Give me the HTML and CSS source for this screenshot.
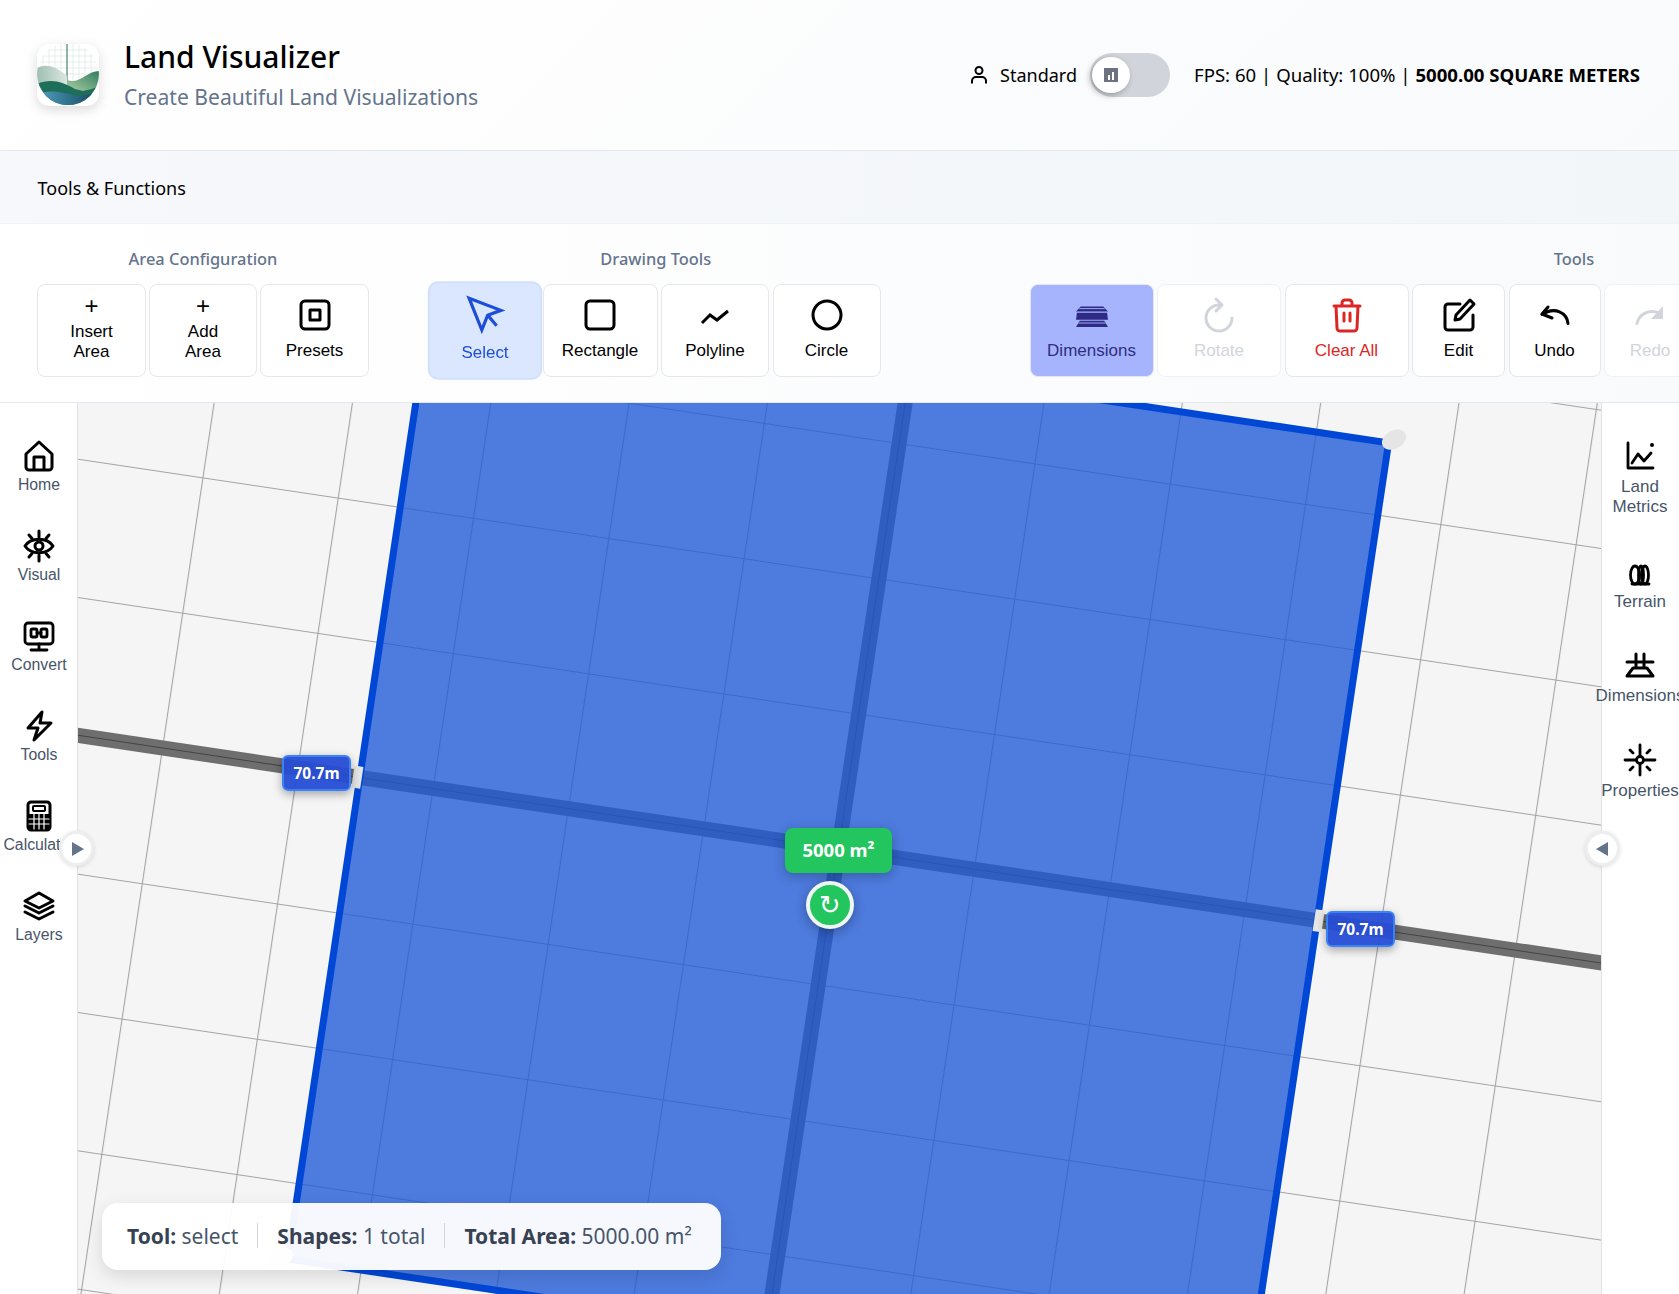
FILE: index.html
```html
<!DOCTYPE html>
<html lang="en">
<head>
<meta charset="utf-8">
<title>Land Visualizer</title>
<link rel="stylesheet" href="styles.css">
</head>
<body>
<div class="app">
  <header class="header">
    <div class="brand">
      <svg class="logo" viewBox="0 0 62 62">
        <defs>
          <clipPath id="logoClip"><circle cx="31" cy="30" r="31"/></clipPath>
          <linearGradient id="hillA" x1="0" x2="1"><stop offset="0" stop-color="#9fbfb2"/><stop offset="1" stop-color="#dbe6e1"/></linearGradient>
          <linearGradient id="hillB" x1="0" x2="1" y1="1" y2="0"><stop offset="0" stop-color="#a9cba2"/><stop offset="1" stop-color="#2f7d5e"/></linearGradient>
          <linearGradient id="hillC" x1="0" x2="1"><stop offset="0" stop-color="#4f9fc0"/><stop offset="1" stop-color="#14465a"/></linearGradient>
        </defs>
        <rect width="62" height="62" rx="12" fill="#fff"/>
        <g clip-path="url(#logoClip)">
          <path class="logo-grid" d="M6 0V62M12 0V62M18 0V62M24 0V62M36 0V62M42 0V62M48 0V62M54 0V62M0 6H62M0 12H62M0 18H62M0 24H62M0 30H62"/>
          <path d="M30 0V42" stroke="#1f6b55" fill="none"/>
          <path d="M0 24C10 19 20 23 30 32V42L0 46Z" fill="url(#hillA)"/>
          <path d="M30 36C42 41 50 27 62 27V46H30Z" fill="url(#hillB)"/>
          <path d="M0 40C14 34 26 38 38 45C46 48 54 46 62 42V62H0Z" fill="#1e6f59"/>
          <path d="M0 50C14 45 26 49 36 51C46 53 56 49 62 46V62H0Z" fill="url(#hillC)"/>
        </g>
      </svg>
      <div class="brand-text">
        <h1 class="title">Land Visualizer</h1>
        <p class="subtitle">Create Beautiful Land Visualizations</p>
      </div>
    </div>
    <div class="status">
      <svg class="user-icon" viewBox="0 0 20 20"><circle cx="10" cy="5.5" r="3.5"/><path d="M3 18.5V16a4 4 0 0 1 4-4h6a4 4 0 0 1 4 4v2.500"/></svg>
      <span class="mode">Standard</span>
      <div class="toggle">
        <div class="thumb"><span class="thumb-icon"><i class="bar-a"></i><i class="bar-b"></i></span></div>
      </div>
      <span class="stats">FPS: 60 | Quality: 100% | <strong>5000.00 SQUARE METERS</strong></span>
    </div>
  </header>

  <div class="strip">Tools &amp; Functions</div>

  <div class="toolbar">
    <section class="group group-area">
      <h2 class="group-title">Area Configuration</h2>
      <div class="tool-row">
        <button class="tool"><span class="plus">+</span><span>Insert<br>Area</span></button>
        <button class="tool"><span class="plus">+</span><span>Add<br>Area</span></button>
        <button class="tool">
          <svg class="icon" viewBox="0 0 32 32"><rect x="2" y="2" width="28" height="28" rx="4"/><rect x="11" y="11" width="10" height="10"/></svg>
          <span>Presets</span>
        </button>
      </div>
    </section>
    <section class="group group-draw">
      <h2 class="group-title">Drawing Tools</h2>
      <div class="tool-row">
        <button class="tool tool-active">
          <svg class="icon icon-miter" viewBox="0 0 32 32"><path d="M1 1L31 12.500L18.500 17L13 31ZM18.500 17L27 27"/></svg>
          <span>Select</span>
        </button>
        <button class="tool">
          <svg class="icon" viewBox="0 0 32 32"><rect x="2" y="2" width="28" height="28" rx="4"/></svg>
          <span>Rectangle</span>
        </button>
        <button class="tool">
          <svg class="icon icon-miter" viewBox="0 0 32 32"><path d="M3 24L11 16L18 21L29 12"/></svg>
          <span>Polyline</span>
        </button>
        <button class="tool">
          <svg class="icon" viewBox="0 0 32 32"><circle cx="16" cy="16" r="14"/></svg>
          <span>Circle</span>
        </button>
      </div>
    </section>
    <section class="group group-tools">
      <h2 class="group-title">Tools</h2>
      <div class="tool-row">
        <button class="tool tool-dim">
          <svg class="icon icon-solid" viewBox="0 0 34 32">
            <path d="M5 7H29L34 12.300H0Z"/><path d="M1 13.700H33L34 21H0Z"/><path d="M4 22H30L34 28.700H0Z"/>
            <path d="M4 9.200H30" class="dim-line"/><path d="M3 24.500H31" class="dim-line"/>
          </svg>
          <span>Dimensions</span>
        </button>
        <button class="tool tool-off">
          <svg class="icon" viewBox="0 0 32 32"><path d="M29 19A13 13 0 1 1 16 6"/><path d="M13 0L19 6L13 12"/></svg>
          <span>Rotate</span>
        </button>
        <button class="tool tool-danger">
          <svg class="icon" viewBox="0 0 32 32"><path d="M3 7H29M11 7V4a3 3 0 0 1 3-3h4a3 3 0 0 1 3 3V7M5 7L6 29a3 3 0 0 0 3 3H23a3 3 0 0 0 3-3L27 7M13 14V22M19 14V22"/></svg>
          <span>Clear All</span>
        </button>
        <button class="tool">
          <svg class="icon" viewBox="0 0 32 32"><path d="M17 5H5a3 3 0 0 0-3 3V28a3 3 0 0 0 3 3H27a3 3 0 0 0 3-3V16"/><path d="M27 1L31 5L17 20L12 21L13 16Z"/></svg>
          <span>Edit</span>
        </button>
        <button class="tool">
          <svg class="icon" viewBox="0 0 32 32"><path d="M29 24.500C28 14 16 7 3 15.500"/><path d="M9 8L3 15L13 19"/></svg>
          <span>Undo</span>
        </button>
        <button class="tool tool-off">
          <svg class="icon" viewBox="0 0 32 32"><path d="M3 24.500C5 15 15 10 25 14"/><path class="fill-current" d="M29 7V20H17Z"/></svg>
          <span>Redo</span>
        </button>
      </div>
    </section>
  </div>

  <div class="work">
    <nav class="side side-left">
      <a class="side-item">
        <svg class="icon" viewBox="0 0 32 32"><path d="M3 14L16 2L29 14V27a3 3 0 0 1-3 3H6a3 3 0 0 1-3-3ZM11 30V17H21V30"/></svg>
        <span>Home</span>
      </a>
      <a class="side-item">
        <svg class="icon" viewBox="0 0 32 32"><path d="M2 16C8 7 24 7 30 16C24 25 8 25 2 16Z"/><circle cx="16" cy="16" r="4"/><path d="M16 1V7M16 25V31M6 5L9 8.500M26 5L23 8.500M6 27L9 23.500M26 27L23 23.500"/></svg>
        <span>Visual</span>
      </a>
      <a class="side-item">
        <svg class="icon icon-thin" viewBox="0 0 32 32"><rect x="2" y="3" width="28" height="21" rx="3"/><path d="M16 24V30M8 30H24M14 13H18"/><rect x="8" y="9" width="6" height="8" rx="1.500"/><rect x="18" y="9" width="6" height="8" rx="1.500"/></svg>
        <span>Convert</span>
      </a>
      <a class="side-item">
        <svg class="icon" viewBox="0 0 32 32"><path d="M19 2L5 18H15L11 30L28 13H17Z"/></svg>
        <span>Tools</span>
      </a>
      <a class="side-item">
        <svg class="icon" viewBox="0 0 32 32"><rect x="5" y="2" width="22" height="28" rx="3"/><rect class="icon-fine" x="10" y="6" width="12" height="5" rx="1"/><rect class="fill-current" x="6" y="14" width="20" height="15"/><path class="grid-white" d="M11 14V29M16 14V29M21 14V29M6 19H26M6 24H26"/></svg>
        <span>Calculator</span>
      </a>
      <a class="side-item">
        <svg class="icon" viewBox="0 0 32 32"><path d="M16 3L30 11L16 18L2 11ZM2 16L16 23L30 16M2 22L16 29L30 22"/></svg>
        <span>Layers</span>
      </a>
    </nav>

    <main class="canvas">
      <svg class="map">
        <defs>
          <pattern id="grid" width="136.8" height="136.8" patternUnits="userSpaceOnUse">
            <path d="M0 0H136.8M0 0V136.8" stroke="#a4a4a4" stroke-width="2.200" fill="none"/>
          </pattern>
        </defs>
        <g transform="translate(760.5 446) rotate(8.5)">
          <rect x="-1300" y="-1300" width="2600" height="2600" fill="url(#grid)"/>
          <rect class="road" x="-1300" y="-7.500" width="2600" height="15"/>
          <rect class="road" x="-7.500" y="-1300" width="15" height="2600"/>
          <path class="road-line" d="M-1300 0H1300M0 -1300V1300"/>
          <rect class="shape" x="-484" y="-483" width="968" height="970"/>
          <rect class="gap" x="-491" y="-11" width="9" height="22"/>
          <rect class="gap" x="481" y="-11" width="9" height="22"/>
          <ellipse class="corner" cx="489" cy="-487" rx="13" ry="9" transform="rotate(-38 489 -487)"/>
          <ellipse class="corner" cx="-491" cy="487" rx="13" ry="9" transform="rotate(-38 -491 487)"/>
        </g>
      </svg>
      <div class="measure measure-left">70.7m</div>
      <div class="measure measure-right">70.7m</div>
      <div class="area-badge">5000 m²</div>
      <div class="rotate-handle">↻</div>
      <button class="collapse collapse-left"><i class="tri-right"></i></button>
      <button class="collapse collapse-right"><i class="tri-left"></i></button>
      <div class="panel">
        <span><b>Tool:</b> select</span>
        <span class="divider"></span>
        <span><b>Shapes:</b> 1 total</span>
        <span class="divider"></span>
        <span><b>Total Area:</b> 5000.00 m²</span>
      </div>
    </main>

    <nav class="side side-right">
      <a class="side-item">
        <svg class="icon icon-thin" viewBox="0 0 32 32"><path d="M4 3V28H29M8 23L14 14L20 21L27 13"/><circle class="fill-current" cx="28" cy="5" r="2"/></svg>
        <span>Land<br>Metrics</span>
      </a>
      <a class="side-item">
        <svg class="icon icon-thin" viewBox="0 0 32 32"><ellipse cx="11" cy="20" rx="4.500" ry="9"/><ellipse cx="17" cy="20" rx="2.500" ry="9"/><ellipse cx="21" cy="20" rx="3.500" ry="9"/><path d="M8 29H25"/></svg>
        <span>Terrain</span>
      </a>
      <a class="side-item">
        <svg class="icon" viewBox="0 0 32 32"><path d="M12 5V19M20 5V19M3 13H29M9 19L3 27H29L23 19Z"/></svg>
        <span>Dimensions</span>
      </a>
      <a class="side-item">
        <svg class="icon icon-thin" viewBox="0 0 32 32"><circle cx="16" cy="16" r="3.500"/><path d="M16 1V12M16 20V31M1 16H12M20 16H31M6 6L9 9M26 6L23 9M6 26L9 23M26 26L23 23"/></svg>
        <span>Properties</span>
      </a>
    </nav>
  </div>
</div>
</body>
</html>
```
FILE: styles.css
```css
* { box-sizing: border-box; }
html, body { margin: 0; height: 100%; overflow: hidden; }
body { font-family: "Noto Sans", "Open Sans", sans-serif; color: #000; background: #fff; }
.app { display: flex; flex-direction: column; height: 1294px; width: 1679px; overflow: hidden; }

.header {
  flex: none; height: 151px; display: flex; align-items: center; justify-content: space-between;
  padding: 0 39px 0 37px; border-bottom: 1px solid #e2e8f0;
  background: linear-gradient(135deg, #ffffff, #f9fafc);
}
.brand { display: flex; align-items: center; gap: 25px; }
.brand-text { margin-bottom: 2px; }
.logo { width: 62px; height: 62px; border-radius: 12px; filter: drop-shadow(0 4px 6px rgba(0,0,0,.14)); }
.logo-grid { stroke: #dbe8e3; stroke-width: .7; fill: none; }
.title { margin: 0; font-size: 30px; font-weight: 500; line-height: 40px; }
.subtitle { margin: 5px 0 0; font-size: 21.100px; line-height: 30px; color: #64748b; }
.status { display: flex; align-items: center; font-size: 18px; }
.user-icon { width: 20px; height: 20px; fill: none; stroke: #000; stroke-width: 2; margin-right: 11px; }
.mode { margin-right: 13px; }
.toggle { width: 80px; height: 44px; border-radius: 22px; background: #d1d5db; padding: 4px 2px; margin-right: 24px; }
.thumb { width: 38px; height: 36px; border-radius: 50%; background: #fff; box-shadow: -2px 2px 6px rgba(0,0,0,.3); display: flex; align-items: center; justify-content: center; }
.thumb-icon { width: 14px; height: 14px; background: #6b7280; display: flex; align-items: flex-end; justify-content: center; gap: 2px; padding-bottom: 2px; }
.bar-a, .bar-b { display: block; width: 2px; background: #fff; }
.bar-a { height: 5px; }
.bar-b { height: 8px; }
.stats { font-size: 18.600px; margin-bottom: 2px; }
.stats strong { font-weight: 700; }

.strip {
  flex: none; height: 73px; display: flex; align-items: center; padding: 2px 0 0 37.500px; font-size: 18px;
  background: linear-gradient(90deg, #f6f8fb, #f3f6f9); border-bottom: 1px solid #eef1f5;
}

.toolbar {
  flex: none; height: 179px; display: flex; padding-left: 37px; overflow: hidden;
  border-bottom: 1px solid #e2e8f0; background: linear-gradient(90deg, #ffffff, #f9fafc);
}
.group { flex: none; }
.group-title { margin: 0; height: 60px; padding-top: 23px; font-size: 16.400px; line-height: 24px; font-weight: 500; color: #64748b; text-align: center; }
.group-draw { margin-left: 62px; }
.group-tools { margin-left: 149px; width: 1089px; }
.tool-row { display: grid; gap: 3.5px; height: 93px; }
.group-area .tool-row { grid-template-columns: 109px 108px 109px; gap: 3px; }
.group-draw .tool-row { grid-template-columns: 108px 115px 108px 108px; }
.group-tools .tool-row { grid-template-columns: 124px 124px 124px 93px 92px 92px; }
.tool {
  display: flex; flex-direction: column; align-items: center; justify-content: center; gap: 10px;
  height: 93px; padding: 0 0 2px; background: #fff; border: 1px solid #e5e7eb; border-radius: 8px;
  font-family: "Liberation Sans", Arial, sans-serif; font-size: 17px; line-height: 20px; color: #000;
}
.plus { font-size: 24px; line-height: 25px; margin-bottom: -10px; transform: translateY(-4px); }
.tool-active { transform: scale(1.06); background: #dbe7fe; border: 2px solid #d2e0fa; color: #1d4ed8; border-radius: 10px; font-size: 16px; }
.tool-dim { background: #a5b4fc; border-color: #e5e7eb; color: #312e81; }
.tool-off { color: #d1d5db; border-color: #f0f1f4; }
.tool-danger { color: #dc2626; }

.icon { width: 32px; height: 32px; flex: none; fill: none; stroke: currentColor; stroke-width: 3; stroke-linecap: round; stroke-linejoin: round; overflow: visible; }
.icon-miter { stroke-linejoin: miter; stroke-linecap: butt; }
.icon-thin { stroke-width: 2.800; }
.icon-fine { stroke-width: 2; }
.icon-solid { stroke: none; fill: #2e2a85; }
.dim-line { stroke: #a5b4fc; stroke-width: 1; fill: none; }
.fill-current { fill: currentColor; stroke: none; }
.grid-white { stroke: #fff; stroke-width: 1.200; }

.work { flex: 1; min-height: 0; display: flex; }
.side { flex: none; width: 78px; background: #fff; display: flex; flex-direction: column; align-items: center; position: relative; z-index: 1; }
.side-left { padding: 37px 0 0 1px; gap: 35px; border-right: 1px solid #e2e2e2; }
.side-right { padding: 37px 1px 0 0; gap: 37.500px; border-left: 1px solid #e2e2e2; }
.side-item { display: flex; flex-direction: column; align-items: center; width: 100%; font-family: "Liberation Sans", Arial, sans-serif; line-height: 20px; color: #475569; text-align: center; white-space: nowrap; }
.side-left .side-item { gap: 3px; font-size: 15.800px; }
.side-right .side-item { gap: 5px; font-size: 17px; }
.side-item .icon { color: #000; }

.canvas { flex: 1; min-width: 0; position: relative; background: #f5f5f5; }
.map { position: absolute; inset: 0; width: 100%; height: 100%; display: block; }
.road { fill: #6e6e6e; }
.road-line { stroke: #444; stroke-width: 1; fill: none; }
.gap { fill: #e6e6e6; }
.shape { fill: rgba(29,88,215,.78); stroke: #0047d6; stroke-width: 7; }
.corner { fill: #e5e5e5; }

.measure {
  position: absolute; width: 69px; height: 36px; display: flex; align-items: center; justify-content: center;
  background: rgba(37,76,212,.95); border: 2px solid #3b82f6; border-radius: 6px; color: #fff; font-weight: 700; font-size: 15.500px;
  box-shadow: 0 3px 10px rgba(0,0,0,.35);
}
.measure-left { left: 204px; top: 352px; }
.measure-right { left: 1248px; top: 508px; }
.area-badge {
  position: absolute; left: 707px; top: 425px; width: 107px; height: 45px; padding-bottom: 2px; display: flex; align-items: center; justify-content: center;
  background: #22c55e; border-radius: 8px; color: #fff; font-weight: 700; font-size: 18.500px; box-shadow: 0 3px 12px rgba(0,0,0,.25);
}
.rotate-handle {
  position: absolute; left: 728px; top: 478px; width: 48px; height: 48px; border-radius: 50%; border: 4px solid #eef7f2; background: #22c55e;
  display: flex; align-items: center; justify-content: center; color: #fff; font-family: "DejaVu Sans", sans-serif; font-size: 26px; box-shadow: 0 3px 12px rgba(0,0,0,.3);
}
.collapse {
  position: absolute; z-index: 3; top: 428px; width: 35px; height: 35px; padding: 0; border-radius: 50%; background: #fff; border: 3px solid #eeeeee;
  display: flex; align-items: center; justify-content: center; box-shadow: 0 1px 4px rgba(0,0,0,.12);
}
.collapse-left { left: -19px; }
.collapse-right { right: -19px; }
.tri-right { width: 0; height: 0; border-style: solid; border-width: 7px 0 7px 12px; border-color: transparent transparent transparent #64748b; margin-left: 2px; }
.tri-left { width: 0; height: 0; border-style: solid; border-width: 7px 12px 7px 0; border-color: transparent #64748b transparent transparent; margin-right: 2px; }
.panel {
  position: absolute; left: 24px; bottom: 24px; height: 67px; width: 619px; display: flex; align-items: center; gap: 19px; padding: 0 25px 2px;
  background: rgba(255,255,255,.95); border-radius: 16px; box-shadow: 0 6px 18px rgba(0,0,0,.12); font-size: 21px; color: #475569; white-space: nowrap;
}
.panel b { font-weight: 700; color: #374151; }
.divider { width: 1px; height: 25px; background: #d1d5db; }
```
